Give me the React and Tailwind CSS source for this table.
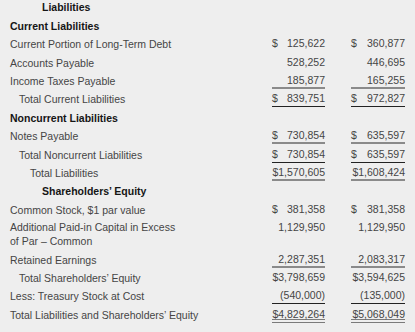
import React from 'react';

// balance sheet rows: indent in px, line = underline under the amounts
const rows = [
  { label: 'Current Liabilities', bold: true },
  { label: 'Current Portion of Long-Term Debt', a: ['$', '125,622'], b: ['$', '360,877'] },
  { label: 'Accounts Payable', a: ['', '528,252'], b: ['', '446,695'] },
  { label: 'Income Taxes Payable', a: ['', '185,877'], b: ['', '165,255'], line: 'gray' },
  { label: 'Total Current Liabilities', indent: 19, a: ['$', '839,751'], b: ['$', '972,827'], line: 'dark' },
  { label: 'Noncurrent Liabilities', bold: true },
  { label: 'Notes Payable', a: ['$', '730,854'], b: ['$', '635,597'], line: 'gray' },
  { label: 'Total Noncurrent Liabilities', indent: 19, a: ['$', '730,854'], b: ['$', '635,597'], line: 'dark' },
  { label: 'Total Liabilities', indent: 30, a: ['', '$1,570,605'], b: ['', '$1,608,424'], line: 'gray' },
  { label: 'Shareholders’ Equity', bold: true, indent: 42 },
  { label: 'Common Stock, $1 par value', a: ['$', '381,358'], b: ['$', '381,358'] },
  { label: ['Additional Paid-in Capital in Excess', 'of Par – Common'], a: ['', '1,129,950'], b: ['', '1,129,950'], tall: true },
  { label: 'Retained Earnings', a: ['', '2,287,351'], b: ['', '2,083,317'], line: 'gray' },
  { label: 'Total Shareholders’ Equity', indent: 19, a: ['', '$3,798,659'], b: ['', '$3,594,625'] },
  { label: 'Less: Treasury Stock at Cost', a: ['', '(540,000)'], b: ['', '(135,000)'], line: 'dark' },
  { label: 'Total Liabilities and Shareholders’ Equity', a: ['', '$4,829,264'], b: ['', '$5,068,049'], line: 'double' },
];

const lineClass = {
  gray: 'border-b-2 border-[#8a8a8a]',
  dark: 'border-b border-[#222222]',
  double: 'border-b-4 border-double border-[#7a7a7a]',
};

function Amount({ value, line, className }) {
  if (!value) return <div className={className} />;
  return (
    <div
      className={`${className} h-[17px] pt-[2px] leading-[13px] flex justify-between ${line ? lineClass[line] : ''}`}
    >
      <span>{value[0]}</span>
      <span>{value[1]}</span>
    </div>
  );
}

function Row({ row }) {
  const h = row.tall ? 'h-[31.6px]' : 'h-[18.4px]';
  const label = Array.isArray(row.label) ? (
    <div className="pt-[1px] leading-[14px]">
      <div>{row.label[0]}</div>
      <div>{row.label[1]}</div>
    </div>
  ) : (
    <div className="leading-[18.4px] whitespace-nowrap">{row.label}</div>
  );

  return (
    <div className={`flex items-start ${h}`}>
      <div
        className={`flex-1 ${row.bold ? 'font-bold text-[#151515]' : ''}`}
        style={{ paddingLeft: row.indent ? row.indent - 10 : 0 }}
      >
        {label}
      </div>
      <Amount value={row.a} line={row.line} className="w-[53px]" />
      <Amount value={row.b} line={row.line} className="w-[54px] ml-[26px]" />
    </div>
  );
}

export default function App() {
  return (
    <div
      className="w-[415px] h-[332px] bg-[#eeeeee] text-[#454545] text-[10.5px] px-[10px] overflow-hidden"
      style={{ fontFamily: '"Liberation Sans", Arial, sans-serif' }}
    >
      <div className="h-[16.8px] leading-[14px] pl-[32px] font-bold text-[#151515]">Liabilities</div>
      {rows.map((row, i) => (
        <Row key={i} row={row} />
      ))}
    </div>
  );
}
